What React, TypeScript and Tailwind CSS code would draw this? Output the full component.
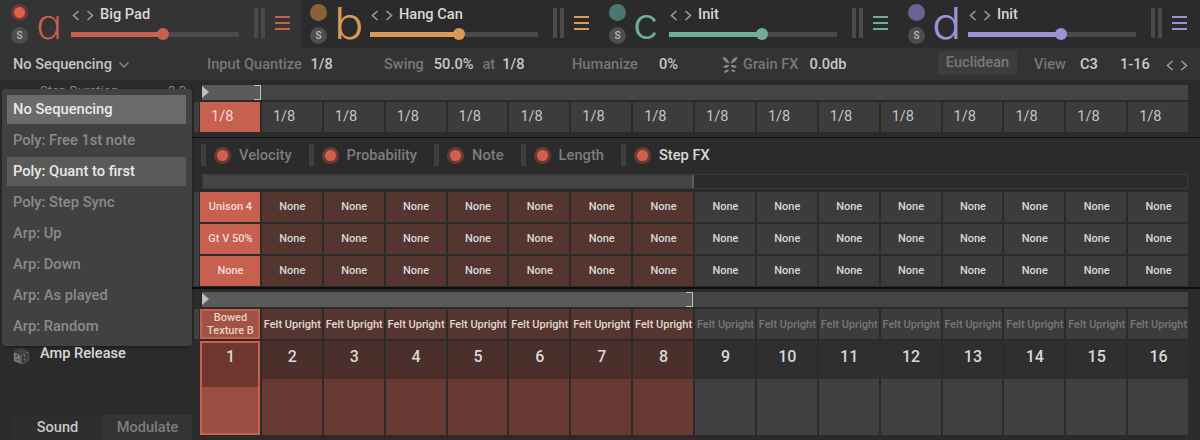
import { type ReactNode } from 'react';
import { ChevronDown } from 'lucide-react';

const STEPS = Array.from({ length: 16 }, (_, i) => i);

const LAYERS = [
    { letter: 'a', glyph: "font-['Open_Sans',sans-serif] italic skew-x-[12deg] scale-x-[1.12]", name: 'Big Pad', width: 'w-[301px]', pad: 'pl-[11px]', tab: 'bg-[#343434]', text: 'text-[#c8604f]', fill: 'bg-[#c8604f]', dot: 'bg-[#e0604f]', fillW: 'w-[92px]', power: true },
    { letter: 'b', glyph: "font-['Inter',sans-serif] scale-x-[1.14]", name: 'Hang Can', width: 'w-[299px]', pad: 'pl-[9px]', tab: 'bg-[#2b2b2b]', text: 'text-[#d99a55]', fill: 'bg-[#d99a55]', dot: 'bg-[#8a6238]', fillW: 'w-[89px]', power: false },
    { letter: 'c', glyph: "font-['Inter',sans-serif] scale-x-[1.06]", name: 'Init', width: 'w-[299px]', pad: 'pl-[9px]', tab: 'bg-[#2b2b2b]', text: 'text-[#6fae9f]', fill: 'bg-[#6fae9f]', dot: 'bg-[#4a7770]', fillW: 'w-[93px]', power: false },
    { letter: 'd', glyph: "font-['Inter',sans-serif] scale-x-[1.14]", name: 'Init', width: 'w-[301px]', pad: 'pl-[9px]', tab: 'bg-[#2b2b2b]', text: 'text-[#9a93d6]', fill: 'bg-[#9a93d6]', dot: 'bg-[#686595]', fillW: 'w-[93px]', power: false },
];

const MENU = [
    { label: 'No Sequencing', cls: 'bg-[#6b6b6b] text-[#e8e8e8] font-medium' },
    { label: 'Poly: Free 1st note', cls: 'text-[#8a8a8a] font-medium' },
    { label: 'Poly: Quant to first', cls: 'bg-[#5a5a5a] text-[#e8e8e8] font-medium' },
    { label: 'Poly: Step Sync', cls: 'text-[#8a8a8a] font-medium' },
    { label: 'Arp: Up', cls: 'text-[#8a8a8a] font-medium' },
    { label: 'Arp: Down', cls: 'text-[#8a8a8a] font-medium' },
    { label: 'Arp: As played', cls: 'text-[#8a8a8a] font-medium' },
    { label: 'Arp: Random', cls: 'text-[#8a8a8a] font-medium' },
];

function Arrows({ className }: { className?: string }) {
    return (
        <svg width="22" height="11" viewBox="0 0 22 11" fill="none" stroke="#9a9a9a" strokeWidth="1.6" className={className}>
            <path d="M6.5 1 L1.5 5.5 L6.5 10" />
            <path d="M15.5 1 L20.5 5.5 L15.5 10" />
        </svg>
    );
}

function LayerTab({ layer }: { layer: (typeof LAYERS)[number] }) {
    return (
        <div className={`${layer.width} ${layer.pad} ${layer.tab} h-[48px] shrink-0 flex items-start`}>
            <div className="w-[17px] mt-[4px] flex flex-col items-center gap-[6px] shrink-0">
                {layer.power ? (
                    <div className="w-[17px] h-[17px] rounded-full bg-[#6b3a33] flex items-center justify-center">
                        <div className="w-[11px] h-[11px] rounded-full bg-[#e0604f]" />
                    </div>
                ) : (
                    <div className={`w-[17px] h-[17px] rounded-full ${layer.dot}`} />
                )}
                <div className="w-[17px] h-[17px] rounded-full bg-[#4d4d4d] text-[#bdbdbd] text-[10px] font-medium flex items-center justify-center">S</div>
            </div>
            <div className={`w-[36px] ml-[7px] h-[48px] text-[43px] leading-[46px] font-light origin-left ${layer.glyph} ${layer.text} shrink-0`}>{layer.letter}</div>
            <div className="w-[168px] shrink-0">
                <div className="h-[30px] flex items-center">
                    <Arrows className="ml-[1px]" />
                    <span className="ml-[6px] text-[14.6px] font-medium text-[#d8d8d8]">{layer.name}</span>
                </div>
                <div className="relative h-[5px] mt-[2px] bg-[#4a4a4a]">
                    <div className={`h-full ${layer.fillW} ${layer.fill}`} />
                    <div className={`absolute top-[-4px] ${layer.fillW} h-0`}>
                        <div className={`ml-[calc(100%-6px)] w-[12px] h-[12px] rounded-full ${layer.fill}`} />
                    </div>
                </div>
            </div>
            <div className="ml-[15px] mt-[8px] flex gap-[3px] shrink-0">
                <div className="w-[4px] h-[30px] bg-[#4a4a4a]" />
                <div className="w-[4px] h-[30px] bg-[#4a4a4a]" />
            </div>
            <div className="ml-[10px] mt-[16px] w-[15px] flex flex-col gap-[4px] shrink-0">
                <div className={`h-[2px] ${layer.fill}`} />
                <div className={`h-[2px] ${layer.fill}`} />
                <div className={`h-[2px] ${layer.fill}`} />
            </div>
        </div>
    );
}

function ToolBar() {
    return (
        <div className="h-[32px] bg-[#333333] flex items-center text-[14.6px] text-[#777777] font-medium whitespace-nowrap">
            <div className="w-[207px] pl-[13px] pt-[2px] flex items-center text-[#c4c4c4] shrink-0">
                No Sequencing
                <ChevronDown size={16} className="ml-[4px] text-[#8a8a8a]" />
            </div>
            <div className="w-[177px] pt-[2px] shrink-0">Input Quantize <span className="ml-[5px] text-[#c8c8c8]">1/8</span></div>
            <div className="w-[188px] pt-[2px] shrink-0">Swing<span className="ml-[10px] text-[#c8c8c8]">50.0%</span><span className="ml-[9px]">at</span><span className="ml-[7px] text-[#c8c8c8]">1/8</span></div>
            <div className="w-[150px] pt-[2px] shrink-0">Humanize<span className="ml-[21px] text-[#c8c8c8]">0%</span></div>
            <div className="w-[216px] pt-[2px] shrink-0 flex items-center">
                <svg width="16" height="17" viewBox="0 0 16 17" fill="#8a8a8a">
                    <path d="M0.5 1 C3 1 6 3 7.5 7.5 C4 7 1.5 5 0.5 1 Z" />
                    <path d="M15.5 1 C13 1 10 3 8.5 7.5 C12 7 14.5 5 15.5 1 Z" />
                    <path d="M1 11 C3 8.5 6 8.5 7.5 9.5 C6 12 3 12.5 1 11 Z" />
                    <path d="M15 11 C13 8.5 10 8.5 8.5 9.5 C10 12 13 12.5 15 11 Z" />
                    <path d="M2 16.5 C3 14 5 13.5 7 14 C6 16 4 17 2 16.5 Z" />
                    <path d="M9 14 C11 13.5 12.5 14 13.5 15.5 C12 16.5 10 16 9 14 Z" />
                </svg>
                <span className="ml-[5px]">Grain FX</span>
                <span className="ml-[11px] text-[#c8c8c8]">0.0db</span>
            </div>
            <div className="w-[79px] h-[24px] mt-[-2px] rounded-[2px] bg-[#3d3d3d] flex items-center justify-center shrink-0">Euclidean</div>
            <div className="ml-[17px] pt-[2px] w-[46px] shrink-0">View</div>
            <div className="w-[40px] pt-[2px] shrink-0 font-semibold text-[#c8c8c8]">C3</div>
            <div className="w-[46px] pt-[2px] shrink-0 text-[#c8c8c8]">1-16</div>
            <Arrows className="mt-[2px]" />
        </div>
    );
}

function Ruler({ width, dark, empty }: { width: string; dark?: boolean; empty?: boolean }) {
    return (
        <div className={`relative h-[15px] ml-[2px] ${dark ? 'bg-[#2b2b2b] border border-[#3a3a3a]' : 'bg-[#444444]'}`}>
            <div className={`relative h-full ${width} ${dark ? 'bg-[#444444] border-r-2 border-[#5c5c5c]' : 'bg-[#5a5a5a]'}`}>
                {!empty && (
                    <>
                        <div className="absolute left-0 top-[1px] w-0 h-0 border-y-[6.5px] border-y-transparent border-l-[7px] border-l-[#bdbdbd]" />
                        <div className="absolute right-0 top-0 w-[7px] h-full border-y border-r border-[#bdbdbd]" />
                    </>
                )}
            </div>
        </div>
    );
}

function FxToggle({ label, active }: { label: string; active?: boolean }) {
    return (
        <div className="flex items-center h-[22px] shrink-0">
            <div className="w-[5px] h-[22px] bg-[#3f3f3f]" />
            <div className="ml-[8px] w-[17px] h-[17px] rounded-full bg-[#6b3a33] flex items-center justify-center">
                <div className="w-[11px] h-[11px] rounded-full bg-[#d2604f]" />
            </div>
            <span className={`ml-[8px] text-[14.7px] font-medium ${active ? 'text-[#d8d8d8]' : 'text-[#7d7d7d]'}`}>{label}</span>
        </div>
    );
}

// Row with the little grey grip on its left edge
function GripRow({ children, className }: { children: ReactNode; className: string }) {
    return (
        <div className="flex ml-[-6px]">
            <div className="w-[5px] mr-[1px] bg-[#404040] shrink-0" />
            <div className={`flex-1 grid grid-cols-16 gap-[2px] ${className}`}>{children}</div>
        </div>
    );
}

function FxCells({ first }: { first: string }) {
    return (
        <div className="grid grid-cols-16 gap-[2px] h-[30px]">
            {STEPS.map(i => (
                <div
                    key={i}
                    className={`flex items-center justify-center pl-[1px] text-[11px] font-medium ${i === 0 ? 'bg-[#c8604f] text-[#f0dcd8]' : i < 8 ? 'bg-[#553530] text-[#d8d8d8]' : 'bg-[#3c3c3c] text-[#d8d8d8]'}`}
                >
                    {i === 0 ? first : 'None'}
                </div>
            ))}
        </div>
    );
}

export default function App() {
    return (
        <div className="relative w-[1200px] h-[440px] overflow-hidden bg-[#2b2b2b] text-[#d8d8d8] font-['Roboto',sans-serif]">
            <div className="flex">
                {LAYERS.map(l => <LayerTab key={l.letter} layer={l} />)}
            </div>
            <ToolBar />

            <div className="flex h-[360px]">
                {/* Left column, mostly hidden by the menu */}
                <div className="w-[200px] shrink-0 flex flex-col">
                    <div className="h-[12px] pl-[40px] pt-[4px] text-[13px] leading-[14px] text-[#888888] flex justify-between pr-[14px] overflow-hidden">
                        <span>Step Duration</span>
                        <span>2.0</span>
                    </div>
                    <div className="mt-[251px] h-[22px] pl-[12px] flex items-center gap-[10px]">
                        <svg width="18" height="18" viewBox="0 0 18 20" className="mt-[3px]">
                            <path d="M9 1 L17 4.5 L9 8 L1 4.5 Z" fill="#444444" />
                            <path d="M1 5.5 L8.5 9 L8.5 19 L1 15.5 Z" fill="#777777" />
                            <path d="M17 5.5 L9.5 9 L9.5 19 L17 15.5 Z" fill="#333333" stroke="#777777" strokeWidth="0.8" />
                            <circle cx="13" cy="10" r="1.2" fill="#777777" />
                            <circle cx="13" cy="14" r="1.2" fill="#777777" />
                            <circle cx="4" cy="9.5" r="1" fill="#333333" />
                            <circle cx="5" cy="14" r="1" fill="#333333" />
                        </svg>
                        <span className="text-[14.6px] font-medium text-[#d8d8d8]">Amp Release</span>
                    </div>
                    <div className="mt-[50px] ml-[12px] w-[180px] h-[25px] flex text-[14.6px] font-medium">
                        <div className="w-[91px] bg-[#2e2e2e] rounded-tl-[3px] flex items-center justify-center text-[#c8c8c8]">Sound</div>
                        <div className="w-[89px] bg-[#343434] flex items-center justify-center text-[#7d7d7d]">Modulate</div>
                    </div>
                </div>

                {/* Sequencer */}
                <div className="w-[988px] shrink-0 flex flex-col">
                    <div className="mt-[5px]"><Ruler width="w-[59px]" /></div>
                    <div className="mt-[2px]">
                        <GripRow className="h-[30px]">
                            {STEPS.map(i => (
                                <div key={i} className={`flex items-center pl-[11px] text-[14.6px] ${i === 0 ? 'bg-[#c8604f] text-[#f0dcd8]' : 'bg-[#3c3c3c] text-[#c4c4c4]'}`}>1/8</div>
                            ))}
                        </GripRow>
                    </div>
                    <div className="mt-[5px] ml-[-8px] mr-[-12px] h-[1px] bg-[#0c0c0c]" />
                    <div className="mt-[6px] ml-[1px] flex gap-[17px]">
                        <FxToggle label="Velocity" />
                        <FxToggle label="Probability" />
                        <FxToggle label="Note" />
                        <FxToggle label="Length" />
                        <FxToggle label="Step FX" active />
                    </div>
                    <div className="mt-[8px]"><Ruler width="w-[491px]" dark empty /></div>
                    <div className="mt-[3px] flex ml-[-6px]">
                        <div className="w-[5px] mr-[1px] bg-[#404040] shrink-0" />
                        <div className="flex-1 flex flex-col gap-[2px]">
                            <FxCells first="Unison 4" />
                            <FxCells first="Gt V 50%" />
                            <FxCells first="None" />
                        </div>
                    </div>
                    <div className="mt-[1px] ml-[-8px] mr-[-12px] h-[2px] bg-[#0c0c0c]" />
                    <div className="mt-[3px]"><Ruler width="w-[491px]" /></div>
                    <div className="mt-[2px]">
                        <GripRow className="h-[30px]">
                            {STEPS.map(i => (
                                <div
                                    key={i}
                                    className={`flex items-center justify-center pl-[1px] text-center text-[11px] leading-[13px] font-medium whitespace-pre-line ${i === 0 ? 'bg-[#a05245] border-2 border-[#c8604f] text-[#ecd0c8]' : i < 8 ? 'bg-[#553530] text-[#e0d8d6]' : 'bg-[#3c3c3c] text-[#777777]'}`}
                                >
                                    {i === 0 ? 'Bowed\nTexture B' : 'Felt Upright'}
                                </div>
                            ))}
                        </GripRow>
                    </div>
                    <div className="mt-[2px] grid grid-cols-16 gap-[2px] h-[94px]">
                        {STEPS.map(i => (
                            <div
                                key={i}
                                className={`flex flex-col ${i === 0 ? 'border-2 border-[#c8604f] bg-[#6d362f]' : i < 8 ? 'bg-[#4a2f2b]' : 'bg-[#2f2f2f]'}`}
                            >
                                <div className={`flex items-center justify-center pl-[1px] text-[16px] font-medium text-[#d8d8d8] ${i === 0 ? 'h-[44px] pb-[16px]' : 'h-[38px] pb-[6px]'}`}>{i + 1}</div>
                                <div className={`flex-1 ${i === 0 ? 'bg-[#9a4d42]' : i < 8 ? 'bg-[#683a33]' : 'bg-[#404040]'}`} />
                            </div>
                        ))}
                    </div>
                </div>
            </div>

            {/* Sequencing mode menu */}
            <div className="absolute left-[2px] top-[89px] w-[190px] h-[257px] rounded-[3px] bg-[#414141] pt-[6px] pl-[5px] pr-[6px] flex flex-col shadow-[0_1px_3px_rgba(0,0,0,0.4)]">
                {MENU.map(m => (
                    <div key={m.label} className={`h-[29px] mb-[2px] shrink-0 pl-[6px] flex items-center text-[14.7px] ${m.cls}`}>{m.label}</div>
                ))}
            </div>
        </div>
    );
}
